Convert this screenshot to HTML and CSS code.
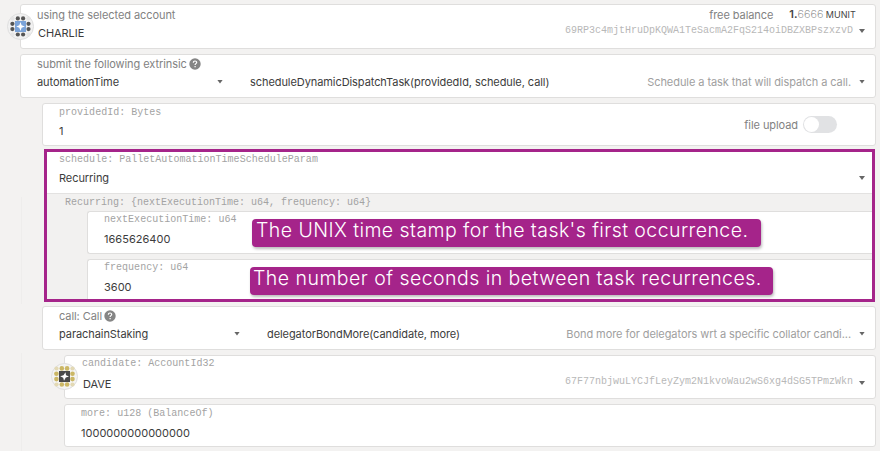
FILE: index.html
```html
<!DOCTYPE html>
<html lang="en">
<head>
<meta charset="utf-8">
<title>Extrinsics</title>
<link rel="stylesheet" href="styles.css">
</head>
<body>
<main class="page">
  <section class="card account">
    <svg class="identicon" viewBox="0 0 27 27">
      <circle cx="13.5" cy="13.5" r="13" fill="#f1f1f1" stroke="#dedede"/>
      <g fill="#e5e5e5"><circle cx="5.5" cy="5.5" r="2"/><circle cx="21.5" cy="5.5" r="2"/><circle cx="5.5" cy="21.5" r="2"/><circle cx="21.5" cy="21.5" r="2"/></g>
      <g fill="#555"><circle cx="10.8" cy="5.4" r="2.1"/><circle cx="16.1" cy="5.4" r="2.1"/><circle cx="10.8" cy="21.5" r="2.1"/><circle cx="16.1" cy="21.5" r="2.1"/><circle cx="5.4" cy="10.8" r="2.1"/><circle cx="5.4" cy="16.1" r="2.1"/><circle cx="21.5" cy="10.8" r="2.1"/><circle cx="21.5" cy="16.1" r="2.1"/></g>
      <path d="M8 8h11v11H8z" fill="#7ba3d8"/>
      <path d="M13.5 9l1.1 3.2 3.3 1.3-3.3 1.2-1.1 3.3-1.2-3.3L9.2 13.5l3.1-1.3z" fill="#fff"/>
    </svg>
    <div class="row head"><span class="label">using the selected account</span><span class="label push">free balance</span><span class="balance"><b>1.</b><i>6666</i><em>MUNIT</em></span></div>
    <div class="row"><span class="value">CHARLIE</span><span class="address push">69RP3c4mjtHruDpKQWA1TeSacmA2FqS214oiDBZXBPszxzvD</span><span class="caret"></span></div>
  </section>

  <section class="card extrinsic">
    <div class="row head"><span class="label">submit the following extrinsic</span><svg class="help" viewBox="0 0 12 12"><circle cx="6" cy="6" r="5.7" fill="#858585"/><path d="M4.3 4.7c0-2.2 3.4-2.2 3.4-.2 0 1.2-1.6 1.1-1.6 2.5M6.1 8v1.2" fill="none" stroke="#fff" stroke-width="1.2"/></svg></div>
    <div class="row"><span class="value section">automationTime</span><span class="caret"></span><span class="value method">scheduleDynamicDispatchTask(providedId, schedule, call)</span><span class="hint push">Schedule a task that will dispatch a call.</span><span class="caret"></span></div>
  </section>

  <section class="card provided">
    <div class="stack"><span class="type">providedId: Bytes</span><span class="value">1</span></div>
    <span class="label push upload">file upload</span><span class="toggle"></span>
  </section>

  <section class="highlight">
    <div class="schedule">
      <span class="type">schedule: PalletAutomationTimeScheduleParam</span>
      <div class="row"><span class="value">Recurring</span><span class="caret push"></span></div>
    </div>
    <div class="variant">
      <span class="type">Recurring: {nextExecutionTime: u64, frequency: u64}</span>
      <div class="field"><span class="type">nextExecutionTime: u64</span><span class="value number">1665626400</span><p class="note first">The UNIX time stamp for the task's first occurrence.</p></div>
      <div class="field last"><span class="type">frequency: u64</span><span class="value number">3600</span><p class="note second">The number of seconds in between task recurrences.</p></div>
    </div>
  </section>

  <section class="card call">
    <div class="row head"><span class="label">call: Call</span><svg class="help" viewBox="0 0 12 12"><circle cx="6" cy="6" r="5.7" fill="#858585"/><path d="M4.3 4.7c0-2.2 3.4-2.2 3.4-.2 0 1.2-1.6 1.1-1.6 2.5M6.1 8v1.2" fill="none" stroke="#fff" stroke-width="1.2"/></svg></div>
    <div class="row"><span class="value section">parachainStaking</span><span class="caret"></span><span class="value method">delegatorBondMore(candidate, more)</span><span class="hint push">Bond more for delegators wrt a specific collator candi...</span><span class="caret"></span></div>
  </section>

  <section class="card candidate">
    <svg class="identicon" viewBox="0 0 27 27">
      <circle cx="13.5" cy="13.5" r="13" fill="#f4f4f3" stroke="#dedede"/>
      <g fill="#e3d9b4"><circle cx="5.5" cy="5.5" r="2.1"/><circle cx="21.5" cy="5.5" r="2.1"/><circle cx="5.5" cy="21.5" r="2.1"/><circle cx="21.5" cy="21.5" r="2.1"/></g>
      <g fill="#cbb765"><circle cx="10.8" cy="5.4" r="2.3"/><circle cx="16.1" cy="5.4" r="2.3"/><circle cx="10.8" cy="21.5" r="2.3"/><circle cx="16.1" cy="21.5" r="2.3"/><circle cx="5.4" cy="10.8" r="2.3"/><circle cx="5.4" cy="16.1" r="2.3"/><circle cx="21.5" cy="10.8" r="2.3"/><circle cx="21.5" cy="16.1" r="2.3"/></g>
      <path d="M8 8h11v11H8z" fill="#494949"/>
      <path d="M14.5 9.2l.5 3 3 1.4-3.2 1-1.8 3.1-.8-3-3-1.4 3.3-1z" fill="#fff"/>
    </svg>
    <div class="stack"><span class="type">candidate: AccountId32</span><span class="value">DAVE</span></div>
    <span class="address push">67F77nbjwuLYCJfLeyZym2N1kvoWau2wS6xg4dSG5TPmzWkn</span><span class="caret"></span>
  </section>

  <section class="card more">
    <div class="stack"><span class="type">more: u128 (BalanceOf)</span><span class="value number">1000000000000000</span></div>
  </section>
</main>
</body>
</html>
```
FILE: styles.css
```css
* { box-sizing: border-box; }
body { margin: 0; background: #f3f2f1; }
.page {
  width: 880px; height: 451px; padding: 4px 4px 0 20px; overflow: hidden;
  display: flex; flex-direction: column;
  font: 11px/14px Inter, sans-serif; letter-spacing: -0.07px; color: #444; white-space: nowrap;
  background:
    linear-gradient(#eeedec, #eeedec) 21px 197px / 1px 107px no-repeat,
    linear-gradient(#eeedec, #eeedec) 21px 353px / 1px 98px no-repeat;
}
.card { flex: none; position: relative; background: #fff; border: 1px solid #dfdedd; border-radius: 3px; }
.row { display: flex; align-items: center; }
.push { margin-left: auto; }
.label { color: #828282; }
.value { color: #3c3c3c; }
.number { letter-spacing: 0.02px; }
.hint { color: #a0a0a0; }
.stack { display: flex; flex-direction: column; }
.type { display: block; font: 10px/12px "Liberation Mono", monospace; letter-spacing: 0.02px; color: #a3a3a3; }
.address { font: 10px/12px "Liberation Mono", monospace; letter-spacing: 0; color: #b8b8b8; }
.caret { flex: none; width: 6px; height: 4px; background: #666; clip-path: polygon(0 0, 100% 0, 50% 100%); }
.identicon { position: absolute; left: -14px; width: 27px; height: 27px; }
.help { width: 12px; height: 12px; margin-left: 2px; }

.account { height: 45px; padding: 2px 10px 0 16px; }
.account .identicon { top: 8px; }
.account .head { padding-right: 9px; }
.account .value { padding: 4px 0 0 1px; }
.account .caret { margin: 0 0 0 6px; }
.balance { margin-left: 16px; display: flex; align-items: baseline; }
.balance b { font-weight: 600; }
.balance i { font-style: normal; font-weight: 200; color: #777; letter-spacing: 0.15px; }
.balance em { font-style: normal; font-size: 9px; margin-left: 2px; color: #444; letter-spacing: 0.1px; }

.extrinsic, .call { height: 44px; padding: 2px 10px 0 16px; }
.extrinsic { margin-top: 5px; }
.extrinsic .row + .row, .call .row + .row { margin-top: 4px; }
.extrinsic .section { width: 180px; }
.call .section { width: 175px; }
.section + .caret { margin-top: -1px; }
.method { margin-left: 27px; }
.hint + .caret { margin: -1px 0 0 8px; }

.provided { margin: 5px 0 0 22px; height: 43px; padding: 3px 38px 0 16px; display: flex; }
.provided .value, .more .value { margin-top: 5px; }
.upload { margin-top: 11px; }
.toggle { width: 34px; height: 17px; margin: 9px 0 0 5px; border-radius: 9px; background: #e1e2e4; }
.toggle::before { content: ""; display: block; width: 15px; height: 15px; margin: 1px; border-radius: 50%; background: #fff; }

.highlight { flex: none; margin: 3px 1px 0 24px; height: 153px; border: 3px solid #a5248a; }
.schedule { height: 42px; padding: 2px 7px 0 12px; background: #fff; border-bottom: 1px solid #e3e2e1; }
.schedule .row { margin-top: 5px; }
.variant { padding: 3px 0 0 40px; background: #f2f1f0; height: 105px; overflow: hidden; }
.variant > .type { margin-left: -22px; letter-spacing: 0; }
.field { display: flex; flex-direction: column; position: relative; height: 43px; margin-top: 2px; padding: 2px 0 0 16px; background: #fff; border: 1px solid #dfdedd; border-right: 0; border-radius: 3px 0 0 3px; }
.field.last { margin-top: 5px; height: 46px; }
.field .value { margin-top: 6px; }
.note {
  position: absolute; margin: 0; height: 28px; border-radius: 4px; padding-left: 4px;
  background: #a5248a; color: #fff; font: 300 19.5px/22px Inter, sans-serif;
  box-shadow: 1px 2px 3px #0004;
}
.first { left: 164px; top: 7px; width: 509px; letter-spacing: 0.43px; }
.second { left: 162px; top: 7px; width: 523px; letter-spacing: 0.46px; padding-left: 3px; }

.call { margin: 4px 0 0 22px; }
.candidate { margin: 5px 0 0 44px; height: 44px; padding: 2px 10px 0 17px; display: flex; }
.candidate .identicon { top: 7px; }
.candidate .value { margin: 7px 0 0 1px; }
.candidate .address { margin-top: 18px; }
.candidate .caret { margin: 23px 0 0 6px; }
.more { margin: 5px 0 0 44px; height: 43px; padding: 3px 0 0 16px; }
.more .value { margin-top: 6px; }
```
